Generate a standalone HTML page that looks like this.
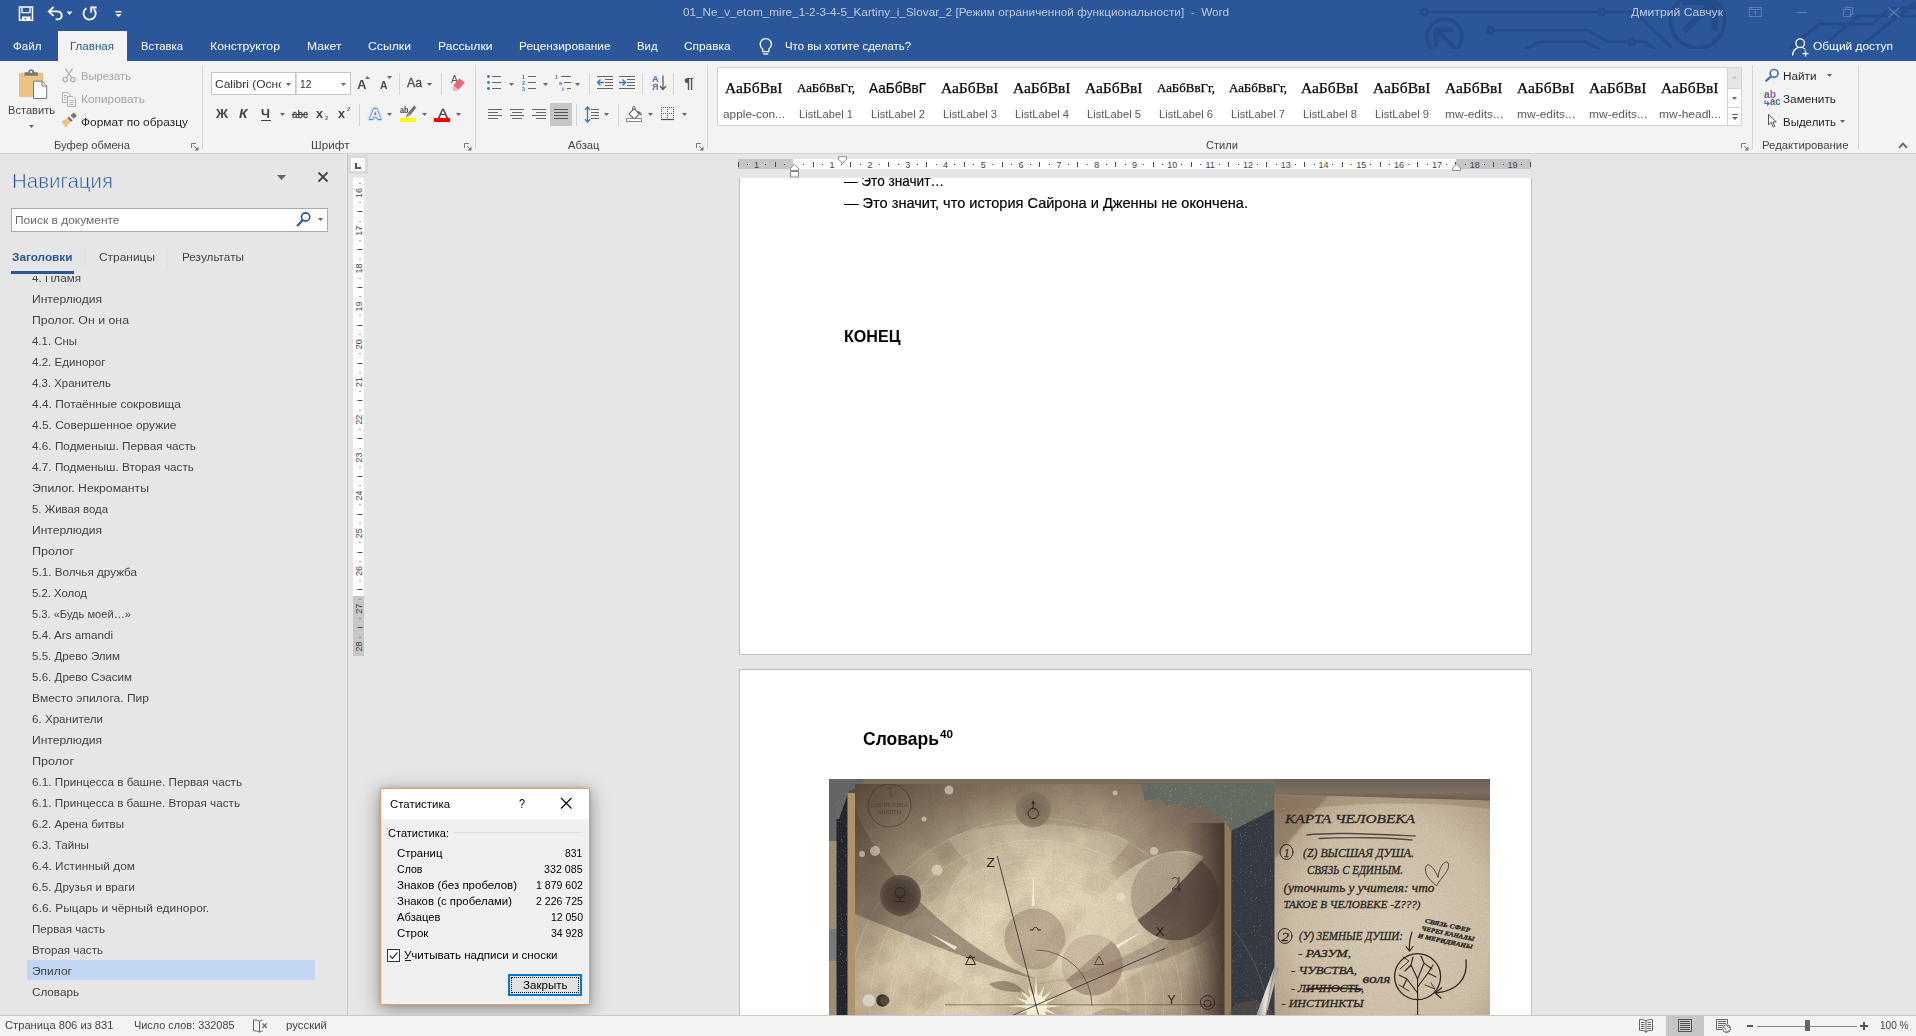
<!DOCTYPE html>
<html lang="ru"><head><meta charset="utf-8"><title>Word</title>
<style>
html,body{margin:0;padding:0;}
body{width:1916px;height:1036px;overflow:hidden;position:relative;background:#e6e6e6;font-family:"Liberation Sans",sans-serif;}
#app{position:absolute;left:0;top:0;width:1916px;height:1036px;overflow:hidden;}
#app div,#app svg,#app span.t{position:absolute;}
span.t{white-space:pre;transform-origin:0 50%;display:block;}
.clip{overflow:hidden;}
</style></head><body><div id="app">
<div style="left:0px;top:0px;width:1916px;height:61px;background:#2b579a;"></div>
<svg style="left:1420px;top:0px;overflow:hidden;" width="496" height="49" viewBox="0 0 496 49">
<g fill="none" stroke="#244c8a" stroke-width="3" stroke-linecap="round">
<circle cx="4.2" cy="12.1" r="3"/><path d="M7.4 12.1H178.8"/><circle cx="182" cy="12.1" r="3"/><path d="M185.200 12.1H216"/>
<circle cx="70.2" cy="30.2" r="3"/><path d="M73.4 30.2H168.5L187.4 41.7H208.4"/><circle cx="211.6" cy="41.7" r="3"/><path d="M214.8 41.7H224L236 50"/>
<path d="M104 50L118 42.5C120 41.9 122 41.7 124 41.7H166L180 50"/>
<circle cx="24.4" cy="36.6" r="17.5" stroke-width="3.8"/>
<circle cx="277.6" cy="21" r="27" stroke-width="4.2"/>
<path d="M219 15.5L251 47"/>
<path d="M368 50L399 24H452L470 8H496"/><path d="M398 50L438 16H496" /><path d="M436 50L496 2"/>
</g>
<g fill="#244c8a">
<path d="M13.5 27.5H33.5V32H21.700L36 46.3L32.8 49.5L18.5 35.200V47H13.5Z"/>
<path d="M262 0H298V31H291V9.5L266 34L261 29L285.5 5H262Z"/>
</g>
</svg>
<svg style="left:0px;top:0px;" width="140" height="30" viewBox="0 0 140 30">
<g fill="none" stroke="#fff" stroke-width="1.5">
<path d="M19.5 7H32.5V20.3H19.5Z"/>
<path d="M22 7.5V12.6H30V7.5" stroke-width="1.3"/>
<path d="M53.6 7L48.8 11.4L53.6 15.8" stroke-width="1.8"/>
<path d="M49.5 11.4H56.5C59.8 11.4 61.7 13.2 61.7 15.4C61.7 17.7 59.9 19.3 57.2 19.3H55.6" stroke-width="1.8"/>
<path d="M86.4 8.3A6.1 6.1 0 1 0 93.7 9" stroke-width="1.8"/>
<path d="M91.2 12.8V7.5H96.6" stroke-width="1.8"/>
<path d="M115.5 11.7H121.5" stroke-width="1.4"/>
</g>
<g fill="#fff"><path d="M66.6 11.6H72.4L69.5 15Z"/><path d="M115.4 14.1H121.6L118.5 17.3Z"/><path d="M22 16.6H30.4V20H26.2V18H24.6V20H22Z"/></g>
</svg>
<span class="t" style="left:683px;top:7.25px;font-size:11.5px;line-height:11.5px;color:#bcc8df;transform:scaleX(1.0220);">01_Ne_v_etom_mire_1-2-3-4-5_Kartiny_i_Slovar_2 [Режим ограниченной функциональности]  -  Word</span>
<span class="t" style="left:1631px;top:7.25px;font-size:11.5px;line-height:11.5px;color:#bcc8df;transform:scaleX(1.0571);">Дмитрий Савчук</span>
<svg style="left:0px;top:0px;" width="1916" height="30" viewBox="0 0 1916 30">
<g fill="none" stroke="#5c7db3" stroke-width="1">
<rect x="1749.5" y="7.5" width="12" height="9"/><path d="M1749.5 9.5H1761.5"/><path d="M1755.5 15V11.2M1753.6 13L1755.5 11.1L1757.4 13"/>
<path d="M1797 12.5H1807"/>
<rect x="1843.5" y="9.5" width="7" height="7"/><path d="M1845.5 9.5V7.5H1852.5V14.5H1850.5"/>
<path d="M1888.5 7.5L1899.5 17.5M1899.5 7.5L1888.5 17.5" stroke-width="1.1"/>
</g></svg>
<div style="left:58px;top:31px;width:69px;height:30px;background:#f3f3f3;"></div>
<span class="t" style="left:12.5px;top:39.65px;font-size:11.7px;line-height:11.7px;color:#fff;transform:scaleX(0.9918);">Файл</span>
<span class="t" style="left:141px;top:39.65px;font-size:11.7px;line-height:11.7px;color:#fff;transform:scaleX(0.9666);">Вставка</span>
<span class="t" style="left:210px;top:39.65px;font-size:11.7px;line-height:11.7px;color:#fff;transform:scaleX(1.0504);">Конструктор</span>
<span class="t" style="left:307px;top:39.65px;font-size:11.7px;line-height:11.7px;color:#fff;transform:scaleX(1.0430);">Макет</span>
<span class="t" style="left:368px;top:39.65px;font-size:11.7px;line-height:11.7px;color:#fff;transform:scaleX(1.0448);">Ссылки</span>
<span class="t" style="left:437.5px;top:39.65px;font-size:11.7px;line-height:11.7px;color:#fff;transform:scaleX(1.0387);">Рассылки</span>
<span class="t" style="left:519px;top:39.65px;font-size:11.7px;line-height:11.7px;color:#fff;transform:scaleX(1.0139);">Рецензирование</span>
<span class="t" style="left:637px;top:39.65px;font-size:11.7px;line-height:11.7px;color:#fff;transform:scaleX(0.9690);">Вид</span>
<span class="t" style="left:684px;top:39.65px;font-size:11.7px;line-height:11.7px;color:#fff;transform:scaleX(1.0140);">Справка</span>
<span class="t" style="left:785px;top:39.65px;font-size:11.7px;line-height:11.7px;color:#fff;transform:scaleX(0.9752);">Что вы хотите сделать?</span>
<span class="t" style="left:70px;top:39.65px;font-size:11.7px;line-height:11.7px;color:#2b579a;transform:scaleX(0.9891);">Главная</span>
<svg style="left:756px;top:36px;" width="20" height="22" viewBox="0 0 20 22"><g fill="none" stroke="#fff" stroke-width="1.3"><path d="M6.8 13.2C5 11.8 4.2 10 4.2 8.2A5.6 5.6 0 0 1 15.4 8.2C15.4 10 14.6 11.8 12.8 13.2V15.6H6.8Z"/><path d="M7.3 18H12.3"/></g></svg>
<svg style="left:1790px;top:36px;" width="22" height="22" viewBox="0 0 22 22"><g fill="none" stroke="#fff" stroke-width="1.3"><circle cx="10.2" cy="7.2" r="4.3"/><path d="M2.6 19.5C2.8 14.8 6 12.3 8.2 11.4M12.4 11.5C13.6 12 14.6 12.7 15.3 13.4"/><path d="M15.5 14.6V20.6M12.5 17.6H18.5"/></g></svg>
<span class="t" style="left:1812.5px;top:39.65px;font-size:11.7px;line-height:11.7px;color:#fff;transform:scaleX(1.0187);">Общий доступ</span>
<div style="left:0px;top:61px;width:1916px;height:92px;background:#f3f3f3;"></div>
<div style="left:0px;top:153px;width:1916px;height:1px;background:#d2d2d2;"></div>
<div style="left:202px;top:65px;width:1px;height:84px;background:#d4d4d4;"></div>
<div style="left:475px;top:65px;width:1px;height:84px;background:#d4d4d4;"></div>
<div style="left:707px;top:65px;width:1px;height:84px;background:#d4d4d4;"></div>
<div style="left:1752px;top:65px;width:1px;height:84px;background:#d4d4d4;"></div>
<div style="left:1858px;top:65px;width:1px;height:84px;background:#d4d4d4;"></div>
<svg style="left:19px;top:69px;" width="29" height="31" viewBox="0 0 29 31">
<rect x="0" y="3.7" width="24.3" height="24.3" rx="1" fill="#eac282"/>
<path d="M5.5 6.800V4.200C5.5 3.5 6 3.2 6.6 3.200H9.200C9.2 1.2 10.5 0.3 12.2 0.300C13.9 0.3 15.2 1.2 15.2 3.200H17.800C18.4 3.2 18.9 3.5 18.9 4.200V6.800Z" fill="#797774"/>
<circle cx="12.2" cy="2.9" r="1.1" fill="#f3f3f3"/>
<path d="M14.5 12.200H23L27.7 17V29.500H14.5Z" fill="#fff" stroke="#797774" stroke-width="1"/>
<path d="M23 12.200V17H27.7" fill="none" stroke="#797774" stroke-width="1"/>
</svg>
<span class="t" style="left:7.5px;top:103.65px;font-size:11.7px;line-height:11.7px;color:#444;transform:scaleX(0.9486);">Вставить</span>
<svg style="left:28.5px;top:124.5px;" width="5" height="3" viewBox="0 0 5 3"><path d="M0 0H5 L2.5 3Z" fill="#666"/></svg>
<svg style="left:61.5px;top:67.5px;" width="15" height="15" viewBox="0 0 15 15"><g fill="none" stroke="#b0b0b0" stroke-width="1.3"><path d="M3.4 0.6L9.9 10M10.6 0.6L4.1 10"/><circle cx="3.2" cy="11.6" r="2.2"/><circle cx="10.8" cy="11.6" r="2.2"/></g></svg>
<span class="t" style="left:80.5px;top:69.65px;font-size:11.7px;line-height:11.7px;color:#a6a6a6;transform:scaleX(0.9618);">Вырезать</span>
<svg style="left:61px;top:90.5px;" width="16" height="16" viewBox="0 0 16 16"><g fill="#f3f3f3" stroke="#b3b3b3" stroke-width="1"><path d="M1.5 1.5H7L9.5 4V11.5H1.5Z"/><path d="M6.5 5.5H12L14.5 8V15.5H6.5Z"/></g><g stroke="#b3b3b3" stroke-width="1"><path d="M3 4.5H6M3 6.5H5M3 8.5H5M8.5 9.5H12.5M8.5 11.5H12.5M8.5 13.5H12.5"/></g></svg>
<span class="t" style="left:80.5px;top:92.65px;font-size:11.7px;line-height:11.7px;color:#a6a6a6;transform:scaleX(1.0169);">Копировать</span>
<svg style="left:61px;top:112px;" width="17" height="17" viewBox="0 0 17 17"><path d="M9.5 3.2L13 0.6L16 4L12.6 6.8Z" fill="#797774"/><path d="M8 4.6L11.6 8.4L9.6 10L6.2 6.2Z" fill="#797774"/><path d="M5.6 6.6L9.2 10.6L4.6 15.8L0.6 9.6Z" fill="#eac282"/></svg>
<span class="t" style="left:80.5px;top:115.65px;font-size:11.7px;line-height:11.7px;color:#262626;transform:scaleX(1.0209);">Формат по образцу</span>
<span class="t" style="left:53.5px;top:138.65px;font-size:11.7px;line-height:11.7px;color:#444;transform:scaleX(0.9569);">Буфер обмена</span>
<svg style="left:191px;top:142.5px;" width="8" height="8" viewBox="0 0 8 8"><g fill="none" stroke="#777" stroke-width="1"><path d="M0.5 5V0.5H5"/><path d="M3 3L6.5 6.5"/></g><path d="M7.5 3.5V7.5H3.5Z" fill="#777"/></svg>
<div style="left:211px;top:72px;width:85px;height:23px;background:#fff;border:1px solid #c6c6c6;box-sizing:border-box;"></div>
<div style="left:296px;top:72px;width:55px;height:23px;background:#fff;border:1px solid #c6c6c6;box-sizing:border-box;border-left-color:#d9d9d9;"></div>
<div class="clip" style="left:212px;top:74px;width:69.3px;height:19px;">
<span class="t" style="left:2.5px;top:4.20px;font-size:11.6px;line-height:11.6px;color:#333;transform:scaleX(1.0324);">Calibri (Осно</span>
</div>
<svg style="left:286px;top:82.5px;" width="5" height="3" viewBox="0 0 5 3"><path d="M0 0H5 L2.5 3Z" fill="#666"/></svg>
<span class="t" style="left:300px;top:78.20px;font-size:11.6px;line-height:11.6px;color:#333;transform:scaleX(0.8910);">12</span>
<svg style="left:341px;top:82.5px;" width="5" height="3" viewBox="0 0 5 3"><path d="M0 0H5 L2.5 3Z" fill="#666"/></svg>
<span class="t" style="left:357px;top:78.00px;font-size:13px;line-height:13px;color:#4a4a4a;font-weight:bold;transform:scaleX(1.0116);">A</span>
<svg style="left:365px;top:75.7px;" width="5" height="3" viewBox="0 0 5 3"><path d="M0 3H5L2.5 0Z" fill="#41719c"/></svg>
<span class="t" style="left:380px;top:79.65px;font-size:10.7px;line-height:10.7px;color:#4a4a4a;font-weight:bold;transform:scaleX(0.9717);">A</span>
<svg style="left:387px;top:75.7px;" width="5" height="3" viewBox="0 0 5 3"><path d="M0 0H5L2.5 3Z" fill="#41719c"/></svg>
<div style="left:399px;top:73px;width:1px;height:22px;background:#d4d4d4;"></div>
<span class="t" style="left:407px;top:77.00px;font-size:12px;line-height:12px;color:#4a4a4a;transform:scaleX(1.0213);-webkit-text-stroke:0.3px #4a4a4a;">Aa</span>
<svg style="left:427px;top:82.5px;" width="5" height="3" viewBox="0 0 5 3"><path d="M0 0H5 L2.5 3Z" fill="#666"/></svg>
<div style="left:441px;top:73px;width:1px;height:22px;background:#d4d4d4;"></div>
<span class="t" style="left:451px;top:74.50px;font-size:10px;line-height:10px;color:#555;transform:scaleX(1.0492);">A</span>
<svg style="left:452px;top:77px;" width="14" height="14" viewBox="0 0 14 14"><path d="M7.2 1.2L12.8 5.4L6.4 12.8L1.2 8.8Z" fill="#e8677c"/><path d="M1.2 8.8L6.4 12.8L5 14H1.8L0.2 12.6Z" fill="#f3b5bf"/></svg>
<span class="t" style="left:216px;top:108.00px;font-size:12px;line-height:12px;color:#444;font-weight:bold;transform:scaleX(1.1050);">Ж</span>
<span class="t" style="left:239px;top:108.00px;font-size:12px;line-height:12px;color:#444;font-weight:bold;font-style:italic;transform:scaleX(1.1501);">К</span>
<span class="t" style="left:261px;top:108.00px;font-size:12px;line-height:12px;color:#444;font-weight:bold;transform:scaleX(1.0667);">Ч</span>
<div style="left:260.5px;top:119.5px;width:10px;height:1.3px;background:#444;"></div>
<svg style="left:280px;top:112.5px;" width="5" height="3" viewBox="0 0 5 3"><path d="M0 0H5 L2.5 3Z" fill="#666"/></svg>
<span class="t" style="left:292px;top:108.75px;font-size:10.5px;line-height:10.5px;color:#444;transform:scaleX(0.9446);text-decoration:line-through;-webkit-text-stroke:0.3px #444;">abc</span>
<span class="t" style="left:316px;top:107.75px;font-size:12.5px;line-height:12.5px;color:#444;font-weight:bold;transform:scaleX(1.0067);">x</span>
<span class="t" style="left:324.5px;top:116.25px;font-size:5.5px;line-height:5.5px;color:#3f74b8;font-weight:bold;transform:scaleX(1.0449);">2</span>
<span class="t" style="left:338px;top:107.75px;font-size:12.5px;line-height:12.5px;color:#444;font-weight:bold;transform:scaleX(1.0067);">x</span>
<span class="t" style="left:346.5px;top:107.25px;font-size:5.5px;line-height:5.5px;color:#3f74b8;font-weight:bold;transform:scaleX(1.0449);">2</span>
<div style="left:359px;top:104px;width:1px;height:22px;background:#d4d4d4;"></div>
<svg style="left:366px;top:103px;" width="18" height="20" viewBox="0 0 18 20"><defs><filter id="glowA" x="-30%" y="-30%" width="160%" height="160%"><feGaussianBlur stdDeviation="0.9"/></filter></defs><text x="9" y="16" text-anchor="middle" font-family="Liberation Sans, sans-serif" font-weight="bold" font-size="15.5" fill="#9dbfee" stroke="#9dbfee" stroke-width="2.4" filter="url(#glowA)">A</text><text x="9" y="16" text-anchor="middle" font-family="Liberation Sans, sans-serif" font-weight="bold" font-size="15.5" fill="#3a6fc0" stroke="#3a6fc0" stroke-width="1.3">A</text><text x="9" y="16" text-anchor="middle" font-family="Liberation Sans, sans-serif" font-weight="bold" font-size="15.5" fill="#fff" stroke="#fff" stroke-width="0.1">A</text></svg>
<svg style="left:387px;top:112.5px;" width="5" height="3" viewBox="0 0 5 3"><path d="M0 0H5 L2.5 3Z" fill="#666"/></svg>
<span class="t" style="left:400px;top:105.75px;font-size:8.5px;line-height:8.5px;color:#444;font-weight:bold;transform:scaleX(0.8567);">ab</span>
<svg style="left:405px;top:105px;" width="12" height="12" viewBox="0 0 12 12"><path d="M9 0.6L11.4 2.6L5 10.4L2.4 8.4Z" fill="#777"/><path d="M2.2 8.8L4.6 10.8L1 12Z" fill="#777"/></svg>
<div style="left:400px;top:118px;width:16px;height:4px;background:#ffff00;"></div>
<svg style="left:422px;top:112.5px;" width="5" height="3" viewBox="0 0 5 3"><path d="M0 0H5 L2.5 3Z" fill="#666"/></svg>
<span class="t" style="left:437.5px;top:106.75px;font-size:13.5px;line-height:13.5px;color:#444;transform:scaleX(1.1092);-webkit-text-stroke:0.3px #444;">A</span>
<div style="left:434px;top:118px;width:16px;height:4px;background:#ff0000;"></div>
<svg style="left:456px;top:112.5px;" width="5" height="3" viewBox="0 0 5 3"><path d="M0 0H5 L2.5 3Z" fill="#666"/></svg>
<span class="t" style="left:311px;top:138.65px;font-size:11.7px;line-height:11.7px;color:#444;transform:scaleX(1.0012);">Шрифт</span>
<svg style="left:464px;top:142.5px;" width="8" height="8" viewBox="0 0 8 8"><g fill="none" stroke="#777" stroke-width="1"><path d="M0.5 5V0.5H5"/><path d="M3 3L6.5 6.5"/></g><path d="M7.5 3.5V7.5H3.5Z" fill="#777"/></svg>
<svg style="left:487px;top:75px;" width="18" height="18" viewBox="0 0 18 18"><path d="M5 1.5H14M5 7.5H14M5 13.5H14" stroke="#666" stroke-width="1" fill="none"/></svg>
<svg style="left:487px;top:75px;" width="4" height="16" viewBox="0 0 4 16"><g fill="#3f74b8"><circle cx="1.5" cy="1.5" r="1.4"/><circle cx="1.5" cy="7.5" r="1.4"/><circle cx="1.5" cy="13.5" r="1.4"/></g></svg>
<svg style="left:508.5px;top:82.5px;" width="5" height="3" viewBox="0 0 5 3"><path d="M0 0H5 L2.5 3Z" fill="#666"/></svg>
<svg style="left:522px;top:75px;" width="18" height="18" viewBox="0 0 18 18"><path d="M6 1.5H14M6 7.5H14M6 13.5H14" stroke="#666" stroke-width="1" fill="none"/></svg>
<span class="t" style="left:522px;top:74.00px;font-size:6px;line-height:6px;color:#3f74b8;font-weight:bold;transform:scaleX(0.8972);">1</span>
<span class="t" style="left:522px;top:80.00px;font-size:6px;line-height:6px;color:#3f74b8;font-weight:bold;transform:scaleX(0.8972);">2</span>
<span class="t" style="left:522px;top:86.00px;font-size:6px;line-height:6px;color:#3f74b8;font-weight:bold;transform:scaleX(0.8972);">3</span>
<svg style="left:542.5px;top:82.5px;" width="5" height="3" viewBox="0 0 5 3"><path d="M0 0H5 L2.5 3Z" fill="#666"/></svg>
<svg style="left:555px;top:75px;" width="18" height="18" viewBox="0 0 18 18"><path d="M6 1.5H16M9 7.5H16M12 13.5H16" stroke="#666" stroke-width="1" fill="none"/></svg>
<span class="t" style="left:555px;top:74.00px;font-size:6px;line-height:6px;color:#3f74b8;font-weight:bold;transform:scaleX(0.8972);">1</span>
<span class="t" style="left:558.5px;top:80.00px;font-size:6px;line-height:6px;color:#3f74b8;font-weight:bold;transform:scaleX(0.8972);">a</span>
<span class="t" style="left:562px;top:86.00px;font-size:6px;line-height:6px;color:#3f74b8;font-weight:bold;transform:scaleX(1.1963);">i</span>
<svg style="left:575px;top:82.5px;" width="5" height="3" viewBox="0 0 5 3"><path d="M0 0H5 L2.5 3Z" fill="#666"/></svg>
<div style="left:589px;top:73px;width:1px;height:22px;background:#d4d4d4;"></div>
<svg style="left:597px;top:75px;" width="18" height="18" viewBox="0 0 18 18"><path d="M0 1.5H16M8 4.5H16M8 7.5H16M8 10.5H16M0 13.5H16" stroke="#666" stroke-width="1" fill="none"/></svg>
<svg style="left:597px;top:78px;" width="8" height="9" viewBox="0 0 8 9"><path d="M0.5 4.5H7M3.5 1.5L0.5 4.5L3.5 7.5" fill="none" stroke="#3f74b8" stroke-width="1.4"/></svg>
<svg style="left:619px;top:75px;" width="18" height="18" viewBox="0 0 18 18"><path d="M0 1.5H16M8 4.5H16M8 7.5H16M8 10.5H16M0 13.5H16" stroke="#666" stroke-width="1" fill="none"/></svg>
<svg style="left:619px;top:78px;" width="8" height="9" viewBox="0 0 8 9"><path d="M0 4.5H6.5M3.5 1.5L6.5 4.5L3.5 7.5" fill="none" stroke="#3f74b8" stroke-width="1.4"/></svg>
<div style="left:642px;top:73px;width:1px;height:22px;background:#d4d4d4;"></div>
<span class="t" style="left:652px;top:74.50px;font-size:9px;line-height:9px;color:#3f74b8;font-weight:bold;">A</span>
<span class="t" style="left:652px;top:82.50px;font-size:9px;line-height:9px;color:#8e5ab5;font-weight:bold;transform:scaleX(1.0048);">Я</span>
<svg style="left:659px;top:75px;" width="8" height="16" viewBox="0 0 8 16"><path d="M4 0.5V14M1 11L4 14.5L7 11" fill="none" stroke="#555" stroke-width="1.2"/></svg>
<div style="left:673px;top:73px;width:1px;height:22px;background:#d4d4d4;"></div>
<span class="t" style="left:684px;top:75.75px;font-size:14.5px;line-height:14.5px;color:#555;font-weight:bold;transform:scaleX(1.2379);">¶</span>
<svg style="left:488px;top:109px;" width="18" height="18" viewBox="0 0 18 18"><path d="M0 0.5H14M0 3.5H10M0 6.5H14M0 9.5H10" stroke="#666" stroke-width="1" fill="none"/></svg>
<svg style="left:510px;top:109px;" width="18" height="18" viewBox="0 0 18 18"><path d="M0 0.5H14M2 3.5H12M0 6.5H14M2 9.5H12" stroke="#666" stroke-width="1" fill="none"/></svg>
<svg style="left:532px;top:109px;" width="18" height="18" viewBox="0 0 18 18"><path d="M0 0.5H14M4 3.5H14M0 6.5H14M4 9.5H14" stroke="#666" stroke-width="1" fill="none"/></svg>
<div style="left:550px;top:103px;width:22px;height:23px;background:#c6c6c6;"></div>
<svg style="left:554px;top:109px;" width="18" height="18" viewBox="0 0 18 18"><path d="M0 0.5H14M0 3.5H14M0 6.5H14M0 9.5H14" stroke="#555" stroke-width="1" fill="none"/></svg>
<div style="left:576px;top:104px;width:1px;height:22px;background:#d4d4d4;"></div>
<svg style="left:591px;top:109px;" width="18" height="18" viewBox="0 0 18 18"><path d="M0 0.5H8M0 3.5H8M0 6.5H8M0 9.5H8" stroke="#666" stroke-width="1" fill="none"/></svg>
<svg style="left:584px;top:106px;" width="7" height="17" viewBox="0 0 7 17"><path d="M3.5 1V16M1 3.8L3.5 1L6 3.8M1 13.2L3.5 16L6 13.2" fill="none" stroke="#3f74b8" stroke-width="1.3"/></svg>
<svg style="left:603.5px;top:112.5px;" width="5" height="3" viewBox="0 0 5 3"><path d="M0 0H5 L2.5 3Z" fill="#666"/></svg>
<div style="left:618px;top:104px;width:1px;height:22px;background:#d4d4d4;"></div>
<svg style="left:626px;top:104px;" width="18" height="19" viewBox="0 0 18 19"><path d="M8.2 4.6L13.4 9.8L8.2 15L3 9.8Z" fill="#fff" stroke="#666" stroke-width="1.1" stroke-linejoin="round"/><path d="M6.6 6.2V3.6C6.6 1.8 9 1.8 9 3.6V5.4" fill="none" stroke="#666" stroke-width="1"/><path d="M11.2 7.6C13.6 7.4 15.2 8.8 15.2 11.2C14.2 9.8 13.2 9.4 11.8 9.2Z" fill="#3f74b8" stroke="#3f74b8" stroke-width=".8"/><rect x="0.5" y="14.5" width="15" height="3" fill="#fff" stroke="#8a8a8a" stroke-width="1"/></svg>
<svg style="left:648px;top:112.5px;" width="5" height="3" viewBox="0 0 5 3"><path d="M0 0H5 L2.5 3Z" fill="#666"/></svg>
<svg style="left:661px;top:106px;" width="14" height="15" viewBox="0 0 14 15"><path d="M0 1.5H13M0 7.5H13M0.5 1V13M6.5 1V13M12.5 1V13" fill="none" stroke="#555" stroke-width="1" stroke-dasharray="1 1"/><path d="M0 13.5H13" stroke="#555" stroke-width="1.2"/></svg>
<svg style="left:682px;top:112.5px;" width="5" height="3" viewBox="0 0 5 3"><path d="M0 0H5 L2.5 3Z" fill="#666"/></svg>
<span class="t" style="left:567.5px;top:138.65px;font-size:11.7px;line-height:11.7px;color:#444;transform:scaleX(0.9605);">Абзац</span>
<svg style="left:696px;top:142.5px;" width="8" height="8" viewBox="0 0 8 8"><g fill="none" stroke="#777" stroke-width="1"><path d="M0.5 5V0.5H5"/><path d="M3 3L6.5 6.5"/></g><path d="M7.5 3.5V7.5H3.5Z" fill="#777"/></svg>
<div style="left:717px;top:67px;width:1025px;height:59px;background:#fff;border:1px solid #d4d4d4;box-sizing:border-box;"></div>
<div style="left:1727px;top:67px;width:15px;height:59px;background:#fff;border:1px solid #d4d4d4;box-sizing:border-box;"></div>
<div style="left:1728px;top:68px;width:13px;height:20px;background:#e6e6e6;"></div>
<div style="left:1728px;top:88px;width:13px;height:1px;background:#d4d4d4;"></div>
<div style="left:1728px;top:107px;width:13px;height:1px;background:#d4d4d4;"></div>
<svg style="left:1732px;top:75.5px;" width="5" height="3" viewBox="0 0 5 3"><path d="M0 3H5L2.5 0Z" fill="#c2c2c2"/></svg>
<svg style="left:1732px;top:96.5px;" width="5" height="3" viewBox="0 0 5 3"><path d="M0 0H5 L2.5 3Z" fill="#666"/></svg>
<div style="left:1732px;top:113.5px;width:6px;height:1px;background:#666;"></div>
<svg style="left:1732px;top:116.5px;" width="6" height="3" viewBox="0 0 6 3"><path d="M0 0H6 L3 3Z" fill="#666"/></svg>
<span class="t" style="left:725px;top:79.70px;font-size:15.6px;line-height:15.6px;color:#000;font-family:'Liberation Serif', serif;transform:scaleX(0.9943);-webkit-text-stroke:0.25px #000;">АаБбВвІ</span>
<span class="t" style="left:722.5px;top:107.65px;font-size:11.7px;line-height:11.7px;color:#5a5a5a;transform:scaleX(1.0151);">apple-con...</span>
<span class="t" style="left:796.5px;top:81.70px;font-size:12.6px;line-height:12.6px;color:#000;font-family:'Liberation Serif', serif;transform:scaleX(1.0232);-webkit-text-stroke:0.25px #000;">АаБбВвГг,</span>
<span class="t" style="left:798.5px;top:107.65px;font-size:11.7px;line-height:11.7px;color:#5a5a5a;transform:scaleX(0.9550);">ListLabel 1</span>
<span class="t" style="left:869px;top:80.70px;font-size:14.6px;line-height:14.6px;color:#000;transform:scaleX(0.9292);-webkit-text-stroke:0.2px #000;">АаБбВвГ</span>
<span class="t" style="left:870.5px;top:107.65px;font-size:11.7px;line-height:11.7px;color:#5a5a5a;transform:scaleX(0.9550);">ListLabel 2</span>
<span class="t" style="left:941px;top:79.70px;font-size:15.6px;line-height:15.6px;color:#000;font-family:'Liberation Serif', serif;transform:scaleX(0.9943);-webkit-text-stroke:0.25px #000;">АаБбВвІ</span>
<span class="t" style="left:942.5px;top:107.65px;font-size:11.7px;line-height:11.7px;color:#5a5a5a;transform:scaleX(0.9550);">ListLabel 3</span>
<span class="t" style="left:1013px;top:79.70px;font-size:15.6px;line-height:15.6px;color:#000;font-family:'Liberation Serif', serif;transform:scaleX(0.9943);-webkit-text-stroke:0.25px #000;">АаБбВвІ</span>
<span class="t" style="left:1014.5px;top:107.65px;font-size:11.7px;line-height:11.7px;color:#5a5a5a;transform:scaleX(0.9550);">ListLabel 4</span>
<span class="t" style="left:1085px;top:79.70px;font-size:15.6px;line-height:15.6px;color:#000;font-family:'Liberation Serif', serif;transform:scaleX(0.9943);-webkit-text-stroke:0.25px #000;">АаБбВвІ</span>
<span class="t" style="left:1086.5px;top:107.65px;font-size:11.7px;line-height:11.7px;color:#5a5a5a;transform:scaleX(0.9550);">ListLabel 5</span>
<span class="t" style="left:1156.5px;top:81.70px;font-size:12.6px;line-height:12.6px;color:#000;font-family:'Liberation Serif', serif;transform:scaleX(1.0232);-webkit-text-stroke:0.25px #000;">АаБбВвГг,</span>
<span class="t" style="left:1158.5px;top:107.65px;font-size:11.7px;line-height:11.7px;color:#5a5a5a;transform:scaleX(0.9550);">ListLabel 6</span>
<span class="t" style="left:1228.5px;top:81.70px;font-size:12.6px;line-height:12.6px;color:#000;font-family:'Liberation Serif', serif;transform:scaleX(1.0232);-webkit-text-stroke:0.25px #000;">АаБбВвГг,</span>
<span class="t" style="left:1230.5px;top:107.65px;font-size:11.7px;line-height:11.7px;color:#5a5a5a;transform:scaleX(0.9550);">ListLabel 7</span>
<span class="t" style="left:1301px;top:79.70px;font-size:15.6px;line-height:15.6px;color:#000;font-family:'Liberation Serif', serif;transform:scaleX(0.9943);-webkit-text-stroke:0.25px #000;">АаБбВвІ</span>
<span class="t" style="left:1302.5px;top:107.65px;font-size:11.7px;line-height:11.7px;color:#5a5a5a;transform:scaleX(0.9550);">ListLabel 8</span>
<span class="t" style="left:1373px;top:79.70px;font-size:15.6px;line-height:15.6px;color:#000;font-family:'Liberation Serif', serif;transform:scaleX(0.9943);-webkit-text-stroke:0.25px #000;">АаБбВвІ</span>
<span class="t" style="left:1374.5px;top:107.65px;font-size:11.7px;line-height:11.7px;color:#5a5a5a;transform:scaleX(0.9550);">ListLabel 9</span>
<span class="t" style="left:1445px;top:79.70px;font-size:15.6px;line-height:15.6px;color:#000;font-family:'Liberation Serif', serif;transform:scaleX(0.9943);-webkit-text-stroke:0.25px #000;">АаБбВвІ</span>
<span class="t" style="left:1444.5px;top:107.65px;font-size:11.7px;line-height:11.7px;color:#5a5a5a;transform:scaleX(1.0265);">mw-edits...</span>
<span class="t" style="left:1517px;top:79.70px;font-size:15.6px;line-height:15.6px;color:#000;font-family:'Liberation Serif', serif;transform:scaleX(0.9943);-webkit-text-stroke:0.25px #000;">АаБбВвІ</span>
<span class="t" style="left:1516.5px;top:107.65px;font-size:11.7px;line-height:11.7px;color:#5a5a5a;transform:scaleX(1.0265);">mw-edits...</span>
<span class="t" style="left:1589px;top:79.70px;font-size:15.6px;line-height:15.6px;color:#000;font-family:'Liberation Serif', serif;transform:scaleX(0.9943);-webkit-text-stroke:0.25px #000;">АаБбВвІ</span>
<span class="t" style="left:1588.5px;top:107.65px;font-size:11.7px;line-height:11.7px;color:#5a5a5a;transform:scaleX(1.0265);">mw-edits...</span>
<span class="t" style="left:1661px;top:79.70px;font-size:15.6px;line-height:15.6px;color:#000;font-family:'Liberation Serif', serif;transform:scaleX(0.9943);-webkit-text-stroke:0.25px #000;">АаБбВвІ</span>
<span class="t" style="left:1658.5px;top:107.65px;font-size:11.7px;line-height:11.7px;color:#5a5a5a;transform:scaleX(1.0261);">mw-headl...</span>
<span class="t" style="left:1206px;top:138.65px;font-size:11.7px;line-height:11.7px;color:#444;transform:scaleX(0.9503);">Стили</span>
<svg style="left:1741px;top:142.5px;" width="8" height="8" viewBox="0 0 8 8"><g fill="none" stroke="#777" stroke-width="1"><path d="M0.5 5V0.5H5"/><path d="M3 3L6.5 6.5"/></g><path d="M7.5 3.5V7.5H3.5Z" fill="#777"/></svg>
<svg style="left:1764px;top:67px;" width="16" height="16" viewBox="0 0 16 16"><circle cx="10.1" cy="6.4" r="3.9" fill="#fff" stroke="#3f74b8" stroke-width="1.7"/><path d="M7.2 9.4L2.2 13.6" stroke="#3f74b8" stroke-width="2.3" stroke-linecap="round"/></svg>
<span class="t" style="left:1783px;top:69.65px;font-size:11.7px;line-height:11.7px;color:#262626;transform:scaleX(1.0042);">Найти</span>
<svg style="left:1827px;top:74px;" width="5" height="3" viewBox="0 0 5 3"><path d="M0 0H5 L2.5 3Z" fill="#666"/></svg>
<span class="t" style="left:1764px;top:89.50px;font-size:10px;line-height:10px;color:#666;font-weight:bold;transform:scaleX(1.0281);">a<span style="color:#9b59b6">b</span></span>
<span class="t" style="left:1769.5px;top:96.50px;font-size:10px;line-height:10px;color:#666;font-weight:bold;transform:scaleX(0.9438);">a<span style="color:#3f74b8">c</span></span>
<svg style="left:1763.5px;top:99.5px;" width="6" height="6" viewBox="0 0 6 6"><path d="M1 0.5V3.5H5M3 1.5L5 3.5L3 5.5" fill="none" stroke="#3f74b8" stroke-width="1.2"/></svg>
<span class="t" style="left:1783px;top:92.65px;font-size:11.7px;line-height:11.7px;color:#262626;transform:scaleX(1.0089);">Заменить</span>
<svg style="left:1767px;top:113px;" width="10" height="16" viewBox="0 0 10 16"><path d="M1.5 1.2V11.8L4.2 9.4L6.2 14L7.8 13.3L5.9 8.9H9.2Z" fill="#fff" stroke="#555" stroke-width="1" stroke-linejoin="round"/></svg>
<span class="t" style="left:1783px;top:115.65px;font-size:11.7px;line-height:11.7px;color:#262626;transform:scaleX(0.9829);">Выделить</span>
<svg style="left:1839.5px;top:120px;" width="5" height="3" viewBox="0 0 5 3"><path d="M0 0H5 L2.5 3Z" fill="#666"/></svg>
<span class="t" style="left:1761.5px;top:138.65px;font-size:11.7px;line-height:11.7px;color:#444;transform:scaleX(0.9716);">Редактирование</span>
<svg style="left:1897.5px;top:141.5px;" width="10" height="7" viewBox="0 0 10 7"><path d="M1 5.8L5 1.6L9 5.8" fill="none" stroke="#666" stroke-width="1.9"/></svg>
<div style="left:347px;top:154px;width:1px;height:861px;background:#c6c6c6;"></div>
<span class="t" style="left:12px;top:170.80px;font-size:20.4px;line-height:20.4px;color:#2b579a;transform:scaleX(1.0026);-webkit-text-stroke:0.55px #e6e6e6;">Навигация</span>
<svg style="left:277px;top:175px;" width="9" height="5" viewBox="0 0 9 5"><path d="M0 0H9L4.5 5Z" fill="#666"/></svg>
<svg style="left:317px;top:171px;" width="12" height="12" viewBox="0 0 12 12"><path d="M1.5 1.5L10.5 10.5M10.5 1.5L1.5 10.5" stroke="#444" stroke-width="1.8" fill="none"/></svg>
<div style="left:11px;top:208px;width:317px;height:24px;background:#fff;border:1px solid #ababab;box-sizing:border-box;"></div>
<span class="t" style="left:14.5px;top:213.65px;font-size:11.7px;line-height:11.7px;color:#6a6a6a;transform:scaleX(1.0237);">Поиск в документе</span>
<svg style="left:296px;top:211px;" width="16" height="16" viewBox="0 0 16 16"><circle cx="9.6" cy="6" r="4.1" fill="none" stroke="#2b579a" stroke-width="1.7"/><path d="M6.6 9.2L1.6 14.4" stroke="#2b579a" stroke-width="2.1" stroke-linecap="round"/></svg>
<svg style="left:318px;top:218px;" width="5" height="3" viewBox="0 0 5 3"><path d="M0 0H5L2.5 3Z" fill="#666"/></svg>
<span class="t" style="left:12px;top:250.65px;font-size:11.7px;line-height:11.7px;color:#2b579a;font-weight:bold;transform:scaleX(1.0081);">Заголовки</span>
<div style="left:11px;top:271px;width:63px;height:3px;background:#2b579a;"></div>
<span class="t" style="left:99px;top:250.65px;font-size:11.7px;line-height:11.7px;color:#444;transform:scaleX(1.0205);">Страницы</span>
<span class="t" style="left:182px;top:250.65px;font-size:11.7px;line-height:11.7px;color:#444;transform:scaleX(1.0071);">Результаты</span>
<div style="left:84px;top:249px;width:1px;height:18px;background:#dedede;"></div>
<div style="left:167px;top:249px;width:1px;height:18px;background:#dedede;"></div>
<div class="clip" style="left:0;top:276px;width:346px;height:739px;">
<div style="left:27px;top:684px;width:288px;height:19.5px;background:#c2d5f2;"></div>
<span class="t" style="left:32px;top:-4.35px;font-size:11.7px;line-height:11.7px;color:#444;transform:scaleX(0.9981);">4. Пламя</span>
<span class="t" style="left:32px;top:16.65px;font-size:11.7px;line-height:11.7px;color:#444;transform:scaleX(1.0342);">Интерлюдия</span>
<span class="t" style="left:32px;top:37.65px;font-size:11.7px;line-height:11.7px;color:#444;transform:scaleX(1.0549);">Пролог. Он и она</span>
<span class="t" style="left:32px;top:58.65px;font-size:11.7px;line-height:11.7px;color:#444;transform:scaleX(0.9773);">4.1. Сны</span>
<span class="t" style="left:32px;top:79.65px;font-size:11.7px;line-height:11.7px;color:#444;transform:scaleX(0.9918);">4.2. Единорог</span>
<span class="t" style="left:32px;top:100.65px;font-size:11.7px;line-height:11.7px;color:#444;transform:scaleX(0.9781);">4.3. Хранитель</span>
<span class="t" style="left:32px;top:121.65px;font-size:11.7px;line-height:11.7px;color:#444;transform:scaleX(1.0198);">4.4. Потаённые сокровища</span>
<span class="t" style="left:32px;top:142.65px;font-size:11.7px;line-height:11.7px;color:#444;transform:scaleX(1.0213);">4.5. Совершенное оружие</span>
<span class="t" style="left:32px;top:163.65px;font-size:11.7px;line-height:11.7px;color:#444;transform:scaleX(1.0067);">4.6. Подменыш. Первая часть</span>
<span class="t" style="left:32px;top:184.65px;font-size:11.7px;line-height:11.7px;color:#444;transform:scaleX(1.0059);">4.7. Подменыш. Вторая часть</span>
<span class="t" style="left:32px;top:205.65px;font-size:11.7px;line-height:11.7px;color:#444;transform:scaleX(1.0461);">Эпилог. Некроманты</span>
<span class="t" style="left:32px;top:226.65px;font-size:11.7px;line-height:11.7px;color:#444;transform:scaleX(0.9730);">5. Живая вода</span>
<span class="t" style="left:32px;top:247.65px;font-size:11.7px;line-height:11.7px;color:#444;transform:scaleX(1.0342);">Интерлюдия</span>
<span class="t" style="left:32px;top:268.65px;font-size:11.7px;line-height:11.7px;color:#444;transform:scaleX(1.0808);">Пролог</span>
<span class="t" style="left:32px;top:289.65px;font-size:11.7px;line-height:11.7px;color:#444;transform:scaleX(0.9987);">5.1. Волчья дружба</span>
<span class="t" style="left:32px;top:310.65px;font-size:11.7px;line-height:11.7px;color:#444;transform:scaleX(0.9705);">5.2. Холод</span>
<span class="t" style="left:32px;top:331.65px;font-size:11.7px;line-height:11.7px;color:#444;transform:scaleX(0.9516);">5.3. «Будь моей…»</span>
<span class="t" style="left:32px;top:352.65px;font-size:11.7px;line-height:11.7px;color:#444;transform:scaleX(0.9973);">5.4. Ars amandi</span>
<span class="t" style="left:32px;top:373.65px;font-size:11.7px;line-height:11.7px;color:#444;transform:scaleX(0.9900);">5.5. Древо Элим</span>
<span class="t" style="left:32px;top:394.65px;font-size:11.7px;line-height:11.7px;color:#444;transform:scaleX(0.9921);">5.6. Древо Сэасим</span>
<span class="t" style="left:32px;top:415.65px;font-size:11.7px;line-height:11.7px;color:#444;transform:scaleX(1.0289);">Вместо эпилога. Пир</span>
<span class="t" style="left:32px;top:436.65px;font-size:11.7px;line-height:11.7px;color:#444;transform:scaleX(0.9934);">6. Хранители</span>
<span class="t" style="left:32px;top:457.65px;font-size:11.7px;line-height:11.7px;color:#444;transform:scaleX(1.0342);">Интерлюдия</span>
<span class="t" style="left:32px;top:478.65px;font-size:11.7px;line-height:11.7px;color:#444;transform:scaleX(1.0808);">Пролог</span>
<span class="t" style="left:32px;top:499.65px;font-size:11.7px;line-height:11.7px;color:#444;transform:scaleX(1.0011);">6.1. Принцесса в башне. Первая часть</span>
<span class="t" style="left:32px;top:520.65px;font-size:11.7px;line-height:11.7px;color:#444;transform:scaleX(1.0004);">6.1. Принцесса в башне. Вторая часть</span>
<span class="t" style="left:32px;top:541.65px;font-size:11.7px;line-height:11.7px;color:#444;transform:scaleX(0.9899);">6.2. Арена битвы</span>
<span class="t" style="left:32px;top:562.65px;font-size:11.7px;line-height:11.7px;color:#444;transform:scaleX(0.9956);">6.3. Тайны</span>
<span class="t" style="left:32px;top:583.65px;font-size:11.7px;line-height:11.7px;color:#444;transform:scaleX(1.0167);">6.4. Истинный дом</span>
<span class="t" style="left:32px;top:604.65px;font-size:11.7px;line-height:11.7px;color:#444;transform:scaleX(0.9935);">6.5. Друзья и враги</span>
<span class="t" style="left:32px;top:625.65px;font-size:11.7px;line-height:11.7px;color:#444;transform:scaleX(1.0226);">6.6. Рыцарь и чёрный единорог.</span>
<span class="t" style="left:32px;top:646.65px;font-size:11.7px;line-height:11.7px;color:#444;transform:scaleX(0.9940);">Первая часть</span>
<span class="t" style="left:32px;top:667.65px;font-size:11.7px;line-height:11.7px;color:#444;transform:scaleX(0.9917);">Вторая часть</span>
<span class="t" style="left:32px;top:688.65px;font-size:11.7px;line-height:11.7px;color:#444;transform:scaleX(1.0261);">Эпилог</span>
<span class="t" style="left:32px;top:709.65px;font-size:11.7px;line-height:11.7px;color:#444;transform:scaleX(0.9987);">Словарь</span>
</div>
<div style="left:348px;top:155px;width:20px;height:19px;background:#dadada;"></div>
<div style="left:351px;top:158px;width:14px;height:13px;background:#fff;"></div>
<svg style="left:354px;top:162px;" width="8" height="8" viewBox="0 0 8 8"><path d="M2 1V6H7" fill="none" stroke="#555" stroke-width="2"/></svg>
<div style="left:352.5px;top:178px;width:11px;height:418px;background:#fff;"></div>
<div style="left:352.5px;top:596px;width:11px;height:60px;background:#c6c6c6;"></div>
<svg style="left:352.5px;top:178px;overflow:hidden;" width="11" height="478" viewBox="0 0 11 478"><text x="0" y="0" transform="translate(9.2 15.0) rotate(-90)" text-anchor="middle" font-family="Liberation Sans, sans-serif" font-size="9" fill="#444">16</text><rect x="4.5" y="33" width="5" height="1" fill="#4a4a4a"/><rect x="6.5" y="5" width="1" height="1" fill="#4a4a4a"/><rect x="6.5" y="24" width="1" height="1" fill="#4a4a4a"/><text x="0" y="0" transform="translate(9.2 52.8) rotate(-90)" text-anchor="middle" font-family="Liberation Sans, sans-serif" font-size="9" fill="#444">17</text><rect x="4.5" y="71" width="5" height="1" fill="#4a4a4a"/><rect x="6.5" y="43" width="1" height="1" fill="#4a4a4a"/><rect x="6.5" y="62" width="1" height="1" fill="#4a4a4a"/><text x="0" y="0" transform="translate(9.2 90.6) rotate(-90)" text-anchor="middle" font-family="Liberation Sans, sans-serif" font-size="9" fill="#444">18</text><rect x="4.5" y="109" width="5" height="1" fill="#4a4a4a"/><rect x="6.5" y="81" width="1" height="1" fill="#4a4a4a"/><rect x="6.5" y="100" width="1" height="1" fill="#4a4a4a"/><text x="0" y="0" transform="translate(9.2 128.4) rotate(-90)" text-anchor="middle" font-family="Liberation Sans, sans-serif" font-size="9" fill="#444">19</text><rect x="4.5" y="147" width="5" height="1" fill="#4a4a4a"/><rect x="6.5" y="118" width="1" height="1" fill="#4a4a4a"/><rect x="6.5" y="137" width="1" height="1" fill="#4a4a4a"/><text x="0" y="0" transform="translate(9.2 166.2) rotate(-90)" text-anchor="middle" font-family="Liberation Sans, sans-serif" font-size="9" fill="#444">20</text><rect x="4.5" y="185" width="5" height="1" fill="#4a4a4a"/><rect x="6.5" y="156" width="1" height="1" fill="#4a4a4a"/><rect x="6.5" y="175" width="1" height="1" fill="#4a4a4a"/><text x="0" y="0" transform="translate(9.2 204.0) rotate(-90)" text-anchor="middle" font-family="Liberation Sans, sans-serif" font-size="9" fill="#444">21</text><rect x="4.5" y="222" width="5" height="1" fill="#4a4a4a"/><rect x="6.5" y="194" width="1" height="1" fill="#4a4a4a"/><rect x="6.5" y="213" width="1" height="1" fill="#4a4a4a"/><text x="0" y="0" transform="translate(9.2 241.8) rotate(-90)" text-anchor="middle" font-family="Liberation Sans, sans-serif" font-size="9" fill="#444">22</text><rect x="4.5" y="260" width="5" height="1" fill="#4a4a4a"/><rect x="6.5" y="232" width="1" height="1" fill="#4a4a4a"/><rect x="6.5" y="251" width="1" height="1" fill="#4a4a4a"/><text x="0" y="0" transform="translate(9.2 279.6) rotate(-90)" text-anchor="middle" font-family="Liberation Sans, sans-serif" font-size="9" fill="#444">23</text><rect x="4.5" y="298" width="5" height="1" fill="#4a4a4a"/><rect x="6.5" y="270" width="1" height="1" fill="#4a4a4a"/><rect x="6.5" y="289" width="1" height="1" fill="#4a4a4a"/><text x="0" y="0" transform="translate(9.2 317.4) rotate(-90)" text-anchor="middle" font-family="Liberation Sans, sans-serif" font-size="9" fill="#444">24</text><rect x="4.5" y="336" width="5" height="1" fill="#4a4a4a"/><rect x="6.5" y="307" width="1" height="1" fill="#4a4a4a"/><rect x="6.5" y="326" width="1" height="1" fill="#4a4a4a"/><text x="0" y="0" transform="translate(9.2 355.2) rotate(-90)" text-anchor="middle" font-family="Liberation Sans, sans-serif" font-size="9" fill="#444">25</text><rect x="4.5" y="374" width="5" height="1" fill="#4a4a4a"/><rect x="6.5" y="345" width="1" height="1" fill="#4a4a4a"/><rect x="6.5" y="364" width="1" height="1" fill="#4a4a4a"/><text x="0" y="0" transform="translate(9.2 393.0) rotate(-90)" text-anchor="middle" font-family="Liberation Sans, sans-serif" font-size="9" fill="#444">26</text><rect x="4.5" y="411" width="5" height="1" fill="#4a4a4a"/><rect x="6.5" y="383" width="1" height="1" fill="#4a4a4a"/><rect x="6.5" y="402" width="1" height="1" fill="#4a4a4a"/><text x="0" y="0" transform="translate(9.2 430.8) rotate(-90)" text-anchor="middle" font-family="Liberation Sans, sans-serif" font-size="9" fill="#444">27</text><rect x="4.5" y="449" width="5" height="1" fill="#4a4a4a"/><rect x="6.5" y="421" width="1" height="1" fill="#4a4a4a"/><rect x="6.5" y="440" width="1" height="1" fill="#4a4a4a"/><text x="0" y="0" transform="translate(9.2 468.6) rotate(-90)" text-anchor="middle" font-family="Liberation Sans, sans-serif" font-size="9" fill="#444">28</text><rect x="6.5" y="459" width="1" height="1" fill="#4a4a4a"/></svg>
<div style="left:738px;top:159px;width:55px;height:10px;background:#c6c6c6;"></div>
<div style="left:793px;top:159px;width:663px;height:10px;background:#fff;"></div>
<div style="left:1456px;top:159px;width:75px;height:10px;background:#c6c6c6;"></div>
<svg style="left:738px;top:159px;" width="794" height="10" viewBox="0 0 794 10"><text x="18.5" y="9" text-anchor="middle" font-family="Liberation Sans, sans-serif" font-size="9" fill="#444">1</text><rect x="37" y="3" width="1" height="5" fill="#4a4a4a"/><rect x="9" y="5" width="1" height="1" fill="#4a4a4a"/><rect x="27" y="5" width="1" height="1" fill="#4a4a4a"/><rect x="75" y="3" width="1" height="5" fill="#4a4a4a"/><rect x="46" y="5" width="1" height="1" fill="#4a4a4a"/><rect x="65" y="5" width="1" height="1" fill="#4a4a4a"/><text x="94.1" y="9" text-anchor="middle" font-family="Liberation Sans, sans-serif" font-size="9" fill="#444">1</text><rect x="112" y="3" width="1" height="5" fill="#4a4a4a"/><rect x="84" y="5" width="1" height="1" fill="#4a4a4a"/><rect x="103" y="5" width="1" height="1" fill="#4a4a4a"/><text x="131.9" y="9" text-anchor="middle" font-family="Liberation Sans, sans-serif" font-size="9" fill="#444">2</text><rect x="150" y="3" width="1" height="5" fill="#4a4a4a"/><rect x="122" y="5" width="1" height="1" fill="#4a4a4a"/><rect x="141" y="5" width="1" height="1" fill="#4a4a4a"/><text x="169.7" y="9" text-anchor="middle" font-family="Liberation Sans, sans-serif" font-size="9" fill="#444">3</text><rect x="188" y="3" width="1" height="5" fill="#4a4a4a"/><rect x="160" y="5" width="1" height="1" fill="#4a4a4a"/><rect x="179" y="5" width="1" height="1" fill="#4a4a4a"/><text x="207.5" y="9" text-anchor="middle" font-family="Liberation Sans, sans-serif" font-size="9" fill="#444">4</text><rect x="226" y="3" width="1" height="5" fill="#4a4a4a"/><rect x="198" y="5" width="1" height="1" fill="#4a4a4a"/><rect x="216" y="5" width="1" height="1" fill="#4a4a4a"/><text x="245.3" y="9" text-anchor="middle" font-family="Liberation Sans, sans-serif" font-size="9" fill="#444">5</text><rect x="264" y="3" width="1" height="5" fill="#4a4a4a"/><rect x="235" y="5" width="1" height="1" fill="#4a4a4a"/><rect x="254" y="5" width="1" height="1" fill="#4a4a4a"/><text x="283.1" y="9" text-anchor="middle" font-family="Liberation Sans, sans-serif" font-size="9" fill="#444">6</text><rect x="301" y="3" width="1" height="5" fill="#4a4a4a"/><rect x="273" y="5" width="1" height="1" fill="#4a4a4a"/><rect x="292" y="5" width="1" height="1" fill="#4a4a4a"/><text x="320.9" y="9" text-anchor="middle" font-family="Liberation Sans, sans-serif" font-size="9" fill="#444">7</text><rect x="339" y="3" width="1" height="5" fill="#4a4a4a"/><rect x="311" y="5" width="1" height="1" fill="#4a4a4a"/><rect x="330" y="5" width="1" height="1" fill="#4a4a4a"/><text x="358.7" y="9" text-anchor="middle" font-family="Liberation Sans, sans-serif" font-size="9" fill="#444">8</text><rect x="377" y="3" width="1" height="5" fill="#4a4a4a"/><rect x="349" y="5" width="1" height="1" fill="#4a4a4a"/><rect x="368" y="5" width="1" height="1" fill="#4a4a4a"/><text x="396.5" y="9" text-anchor="middle" font-family="Liberation Sans, sans-serif" font-size="9" fill="#444">9</text><rect x="415" y="3" width="1" height="5" fill="#4a4a4a"/><rect x="387" y="5" width="1" height="1" fill="#4a4a4a"/><rect x="405" y="5" width="1" height="1" fill="#4a4a4a"/><text x="434.3" y="9" text-anchor="middle" font-family="Liberation Sans, sans-serif" font-size="9" fill="#444">10</text><rect x="453" y="3" width="1" height="5" fill="#4a4a4a"/><rect x="424" y="5" width="1" height="1" fill="#4a4a4a"/><rect x="443" y="5" width="1" height="1" fill="#4a4a4a"/><text x="472.1" y="9" text-anchor="middle" font-family="Liberation Sans, sans-serif" font-size="9" fill="#444">11</text><rect x="490" y="3" width="1" height="5" fill="#4a4a4a"/><rect x="462" y="5" width="1" height="1" fill="#4a4a4a"/><rect x="481" y="5" width="1" height="1" fill="#4a4a4a"/><text x="509.9" y="9" text-anchor="middle" font-family="Liberation Sans, sans-serif" font-size="9" fill="#444">12</text><rect x="528" y="3" width="1" height="5" fill="#4a4a4a"/><rect x="500" y="5" width="1" height="1" fill="#4a4a4a"/><rect x="519" y="5" width="1" height="1" fill="#4a4a4a"/><text x="547.7" y="9" text-anchor="middle" font-family="Liberation Sans, sans-serif" font-size="9" fill="#444">13</text><rect x="566" y="3" width="1" height="5" fill="#4a4a4a"/><rect x="538" y="5" width="1" height="1" fill="#4a4a4a"/><rect x="557" y="5" width="1" height="1" fill="#4a4a4a"/><text x="585.5" y="9" text-anchor="middle" font-family="Liberation Sans, sans-serif" font-size="9" fill="#444">14</text><rect x="604" y="3" width="1" height="5" fill="#4a4a4a"/><rect x="576" y="5" width="1" height="1" fill="#4a4a4a"/><rect x="594" y="5" width="1" height="1" fill="#4a4a4a"/><text x="623.3" y="9" text-anchor="middle" font-family="Liberation Sans, sans-serif" font-size="9" fill="#444">15</text><rect x="642" y="3" width="1" height="5" fill="#4a4a4a"/><rect x="613" y="5" width="1" height="1" fill="#4a4a4a"/><rect x="632" y="5" width="1" height="1" fill="#4a4a4a"/><text x="661.1" y="9" text-anchor="middle" font-family="Liberation Sans, sans-serif" font-size="9" fill="#444">16</text><rect x="679" y="3" width="1" height="5" fill="#4a4a4a"/><rect x="651" y="5" width="1" height="1" fill="#4a4a4a"/><rect x="670" y="5" width="1" height="1" fill="#4a4a4a"/><text x="698.9" y="9" text-anchor="middle" font-family="Liberation Sans, sans-serif" font-size="9" fill="#444">17</text><rect x="717" y="3" width="1" height="5" fill="#4a4a4a"/><rect x="689" y="5" width="1" height="1" fill="#4a4a4a"/><rect x="708" y="5" width="1" height="1" fill="#4a4a4a"/><text x="736.7" y="9" text-anchor="middle" font-family="Liberation Sans, sans-serif" font-size="9" fill="#444">18</text><rect x="755" y="3" width="1" height="5" fill="#4a4a4a"/><rect x="727" y="5" width="1" height="1" fill="#4a4a4a"/><rect x="746" y="5" width="1" height="1" fill="#4a4a4a"/><text x="774.5" y="9" text-anchor="middle" font-family="Liberation Sans, sans-serif" font-size="9" fill="#444">19</text><rect x="765" y="5" width="1" height="1" fill="#4a4a4a"/><rect x="783" y="5" width="1" height="1" fill="#4a4a4a"/><rect x="0" y="3" width="1" height="5" fill="#4a4a4a"/><rect x="792" y="3" width="1" height="5" fill="#4a4a4a"/></svg>
<svg style="left:837.5px;top:156px;" width="9" height="9" viewBox="0 0 9 9"><path d="M0.5 0.7H8.5V3.2L4.5 7.6L0.5 3.2Z" fill="#fff" stroke="#8a8a8a" stroke-width="1"/></svg>
<svg style="left:790px;top:163px;" width="9" height="15" viewBox="0 0 9 15"><path d="M0.5 5.4L4.5 1L8.5 5.4V7.5H0.5Z" fill="#fff" stroke="#8a8a8a" stroke-width="1"/><path d="M0.5 8.5H8.5V14H0.5Z" fill="#fff" stroke="#8a8a8a" stroke-width="1"/></svg>
<svg style="left:1451.5px;top:163px;" width="9" height="8" viewBox="0 0 9 8"><path d="M0.5 7.5V5.2L4.5 0.8L8.5 5.2V7.5Z" fill="#fff" stroke="#8a8a8a" stroke-width="1"/></svg>
<div class="clip" style="left:348px;top:178px;width:1568px;height:837px;">
<div style="left:391px;top:-8px;width:793px;height:485px;background:#fff;border:1px solid #c0c0c0;box-sizing:border-box;"></div>
<div style="left:391px;top:491px;width:793px;height:500px;background:#fff;border:1px solid #c0c0c0;box-sizing:border-box;"></div>
<span class="t" style="left:496px;top:-4.30px;font-size:14.6px;line-height:14.6px;color:#000;transform:scaleX(0.9309);-webkit-text-stroke:0.2px #000;">— Это значит…</span>
<span class="t" style="left:496px;top:17.70px;font-size:14.6px;line-height:14.6px;color:#000;transform:scaleX(0.9975);-webkit-text-stroke:0.2px #000;">— Это значит, что история Сайрона и Дженны не окончена.</span>
<span class="t" style="left:495.5px;top:151.10px;font-size:16.8px;line-height:16.8px;color:#000;font-weight:bold;transform:scaleX(0.9597);">КОНЕЦ</span>
<span class="t" style="left:515px;top:553.10px;font-size:17.8px;line-height:17.8px;color:#000;font-weight:bold;transform:scaleX(0.9850);">Словарь</span>
<span class="t" style="left:591.8px;top:551.30px;font-size:11.4px;line-height:11.4px;color:#000;font-weight:bold;transform:scaleX(1.0259);">40</span>
<svg style="left:481px;top:601px;" width="661" height="260" viewBox="0 0 661 260">
<defs>
<radialGradient id="gMap" cx="48%" cy="60%" r="85%"><stop offset="0" stop-color="#e6d9ba"/><stop offset=".5" stop-color="#dccdad"/><stop offset=".8" stop-color="#bba487"/><stop offset="1" stop-color="#8c7662"/></radialGradient>
<radialGradient id="gPage" cx="55%" cy="55%" r="75%"><stop offset="0" stop-color="#dacdb6"/><stop offset=".6" stop-color="#d0c1a9"/><stop offset="1" stop-color="#ab967e"/></radialGradient>
<radialGradient id="gDk" cx="50%" cy="50%" r="50%"><stop offset="0" stop-color="#3f332c" stop-opacity=".92"/><stop offset=".75" stop-color="#4e4037" stop-opacity=".88"/><stop offset="1" stop-color="#5e4e42" stop-opacity=".8"/></radialGradient>
<radialGradient id="gTop" cx="50%" cy="50%" r="50%"><stop offset="0" stop-color="#6f5f4e" stop-opacity=".85"/><stop offset="1" stop-color="#857562" stop-opacity=".7"/></radialGradient>
<radialGradient id="gBig" cx="50%" cy="50%" r="50%"><stop offset="0" stop-color="#54433b" stop-opacity=".88"/><stop offset="1" stop-color="#5f4d43" stop-opacity=".82"/></radialGradient>
<linearGradient id="gCorner" x1="0" y1="0" x2="1" y2="1"><stop offset="0" stop-color="#4a3c31" stop-opacity=".85"/><stop offset=".42" stop-color="#4a3c31" stop-opacity="0"/></linearGradient>
<linearGradient id="gTR" x1="1" y1="0" x2="0" y2="1"><stop offset="0" stop-color="#5a4a40" stop-opacity=".7"/><stop offset=".4" stop-color="#5a4a40" stop-opacity="0"/></linearGradient>
<linearGradient id="gRight" x1="0" y1="0" x2="1" y2="0"><stop offset="0" stop-color="#6a574b" stop-opacity="0"/><stop offset="1" stop-color="#6a574b" stop-opacity=".5"/></linearGradient>
<linearGradient id="gEdgeR" x1="0" y1="0" x2="1" y2="0"><stop offset="0" stop-color="#3c302a" stop-opacity="0"/><stop offset=".5" stop-color="#3c302a" stop-opacity=".4"/><stop offset="1" stop-color="#3c302a" stop-opacity=".9"/></linearGradient>
<linearGradient id="gBand" x1="0" y1="0" x2="0" y2="1"><stop offset="0" stop-color="#6a6158"/><stop offset=".6" stop-color="#7c7062"/><stop offset="1" stop-color="#554c45"/></linearGradient>
<linearGradient id="gPen" x1="0" y1="0" x2="1" y2="0"><stop offset="0" stop-color="#8d8a82"/><stop offset=".45" stop-color="#e4e2da"/><stop offset="1" stop-color="#9a978e"/></linearGradient>
<filter id="grain" x="0" y="0" width="100%" height="100%"><feTurbulence type="fractalNoise" baseFrequency=".9" numOctaves="2" seed="3" result="n"/><feColorMatrix in="n" type="matrix" values="0 0 0 0 0  0 0 0 0 0  0 0 0 0 0  .9 .9 .9 0 -1.05"/></filter>
<filter id="blot" x="0" y="0" width="100%" height="100%"><feTurbulence type="fractalNoise" baseFrequency=".035" numOctaves="3" seed="11" result="n"/><feColorMatrix in="n" type="matrix" values="0 0 0 0 .3  0 0 0 0 .22  0 0 0 0 .15  1.6 1.6 0 0 -1.25"/></filter>
<filter id="stars" x="0" y="0" width="100%" height="100%"><feTurbulence type="fractalNoise" baseFrequency=".8" numOctaves="1" seed="7" result="n"/><feColorMatrix in="n" type="matrix" values="0 0 0 0 .75  0 0 0 0 .75  0 0 0 0 .72  2.5 2.5 0 0 -2.9"/></filter>
<filter id="soft"><feGaussianBlur stdDeviation="1.2"/></filter>
<clipPath id="cMap"><path d="M26 5H312L316 22L330 19L338 27L352 24L360 31L374 28L396 42V260H26Z"/></clipPath>
<clipPath id="cGap"><path d="M402.5 52V260H446V5H312L316 22L330 19L338 27L352 24L360 31L374 28L396 42Z"/></clipPath>
</defs>
<rect width="661" height="260" fill="#4b4d49"/>
<!-- top band -->
<rect x="0" y="0" width="661" height="5" fill="#7a6b5b"/>
<rect x="300" y="4" width="150" height="30" fill="#656a61"/>
<rect x="445" y="0" width="216" height="23" fill="url(#gBand)"/>
<!-- left edge -->
<rect x="0" y="0" width="10" height="260" fill="#9a8e73"/><rect x="0" y="0" width="10" height="62" fill="#646565"/><rect x="0" y="150" width="9" height="32" fill="#77797a"/>
<rect x="7.5" y="12" width="11.5" height="248" fill="#23262c"/>
<path d="M0 0H34V6L20 12L10 40H0Z" fill="#646565"/>
<rect x="18.5" y="14" width="8" height="246" fill="#ae9468"/>
<!-- map parchment -->
<g clip-path="url(#cMap)">
<rect x="26" y="0" width="372" height="260" fill="url(#gMap)"/>
<rect x="26" y="0" width="372" height="260" filter="url(#blot)" opacity=".33"/>
<rect x="26" y="0" width="372" height="260" fill="url(#gCorner)"/>
<rect x="26" y="0" width="372" height="260" fill="url(#gTR)"/>
<rect x="270" y="0" width="128" height="260" fill="url(#gRight)"/>
<!-- pale translucent shapes -->
<g fill="#f3ead6" opacity=".22">
<circle cx="207" cy="150" r="95"/>
<ellipse cx="130" cy="175" rx="62" ry="28" transform="rotate(28 130 175)"/>
<ellipse cx="285" cy="175" rx="62" ry="28" transform="rotate(-28 285 175)"/>
<circle cx="208" cy="227" r="56"/>
<circle cx="140" cy="262" r="52"/>
<path d="M120 60C150 40 260 40 300 62C270 120 150 120 120 60Z"/>
</g>
<g fill="none" stroke="#fbf5e6" stroke-width="1" opacity=".2"><circle cx="207" cy="227" r="74"/><circle cx="207" cy="227" r="92"/><circle cx="207" cy="227" r="110"/><circle cx="207" cy="227" r="128"/><circle cx="207" cy="227" r="146"/><circle cx="207" cy="227" r="166"/><circle cx="207" cy="227" r="188"/></g>
<!-- dark band sweeping from left circle -->
<path d="M26 30C50 90 120 165 207 200C160 190 90 160 26 135Z" fill="#4f4035" opacity=".42"/>
<path d="M398 95C360 150 300 185 207 205C290 200 350 180 398 150Z" fill="#5a4a3e" opacity=".25"/>
<!-- circles -->
<circle cx="205.8" cy="160" r="30.5" fill="#9b866f" opacity=".5"/>
<circle cx="263.3" cy="186" r="30.5" fill="#8d6f64" opacity=".55"/>
<circle cx="283" cy="262" r="33" fill="#a58d72" opacity=".5"/>
<circle cx="204.2" cy="30.7" r="17.6" fill="url(#gTop)"/>
<circle cx="71.5" cy="116.3" r="20.6" fill="url(#gDk)"/>
<circle cx="345.8" cy="117.3" r="44" fill="url(#gBig)"/>
<path d="M375 78C352 104 332 124 311 139C280 163 240 200 207 227C222 182 258 122 298 92C322 76 352 64 375 78Z" fill="#e4d7ba" opacity=".6"/>
<rect x="356" y="44" width="42" height="216" fill="url(#gEdgeR)"/>
<path d="M207 171A56 56 0 0 1 263 227" fill="none" stroke="#4a3d33" stroke-width=".8" opacity=".8"/>
<!-- needles -->
<g fill="#fbf6e8" opacity=".9">
<path d="M204.2 94L205.6 127H202.8Z"/>
<path d="M100 154L128 168L126 171Z"/>
<path d="M313 153L287 166L288.5 169Z"/>
</g>
<!-- star -->
<radialGradient id="gHalo" cx="50%" cy="50%" r="50%"><stop offset="0" stop-color="#8c7860" stop-opacity=".55"/><stop offset="1" stop-color="#8c7860" stop-opacity="0"/></radialGradient>
<circle cx="207" cy="227" r="48" fill="url(#gHalo)"/>
<path d="M160 205C175 198 190 204 196 214C184 212 170 214 160 205Z" fill="#5b4a3c" opacity=".45"/>
<polygon points="207.0,205.0 208.9,217.7 215.4,206.7 212.3,219.1 222.6,211.4 214.9,221.7 227.3,218.6 216.3,225.1 229.0,227.0 216.3,228.9 227.3,235.4 214.9,232.3 222.6,242.6 212.3,234.9 215.4,247.3 208.9,236.3 207.0,249.0 205.1,236.3 198.6,247.3 201.7,234.9 191.4,242.6 199.1,232.3 186.7,235.4 197.7,228.9 185.0,227.0 197.7,225.1 186.7,218.6 199.1,221.7 191.4,211.4 201.7,219.1 198.6,206.7 205.1,217.7" fill="#f7f0d2"/>
<polygon points="207.0,197.0 209.1,224.9 237.0,227.0 209.1,229.1 207.0,257.0 204.9,229.1 177.0,227.0 204.9,224.9" fill="#f7f0d2" opacity=".9"/>
<circle cx="207" cy="227" r="11" fill="#fbf6dc"/>
<!-- lines -->
<g stroke="#2e2721" stroke-width=".8" fill="none">
<path d="M168.3 77L209.5 236"/><path d="M180 238L336 169.5"/><path d="M116 225.8H396" opacity=".6"/>
</g>
<!-- symbols -->
<g fill="none" stroke="#2e2721" stroke-width="1">
<circle cx="204.2" cy="34.5" r="5.2"/><path d="M204.2 29V22M203 25L204.2 22L205.4 25"/>
<circle cx="71" cy="113.5" r="5"/><path d="M71 118.5V122M66.5 122.5H75.5"/>
<path d="M201 151H204C204 147.5 209 147.5 209 151H212"/>
<path d="M141.5 176L146.5 185.500H136.500ZM137 178.500H146"/>
<path d="M270 177L274.5 185.500H265.500Z" opacity=".7"/>
<path d="M343 100C346 97 350 99 349 103C348 106 345 108 343 110H352M350 98V113" opacity=".8"/>
<circle cx="378.5" cy="223.5" r="7"/><circle cx="378.5" cy="224.5" r="3.5"/>
<circle cx="60.5" cy="26.5" r="21.5" stroke-width=".7" opacity=".65"/>
</g>
<g fill="#2a241f" font-family="'Liberation Sans', sans-serif" font-size="13.5" text-anchor="middle">
<text x="161.5" y="87.5">Z</text><text x="331" y="157">X</text><text x="342.5" y="225" font-size="12.5">Y</text>
</g>
<g fill="#4a3f35" font-family="'Liberation Serif', serif" font-size="5.6" text-anchor="middle" opacity=".8"><text x="60.5" y="27.5">БИБЛИОТЕКА</text><text x="60.5" y="34.5">АКВИРЫ</text></g>
<path d="M58 10C61 8 64 11 61 14C59 16 62 18 64 17" fill="none" stroke="#4a3f35" stroke-width=".8" opacity=".7"/>
<!-- moons -->
<circle cx="39.8" cy="221.5" r="6.2" fill="#ded8cc"/><circle cx="53.4" cy="221.5" r="6.2" fill="#3f332c"/><circle cx="55.8" cy="221.5" r="4.6" fill="#5a4a3f"/>
<!-- speckles -->
<g fill="#f4eedd" opacity=".55"><circle cx="120" cy="11" r="4.5"/><circle cx="46" cy="72" r="5"/><circle cx="108" cy="91" r="5.5"/><circle cx="33" cy="75" r="3"/><circle cx="286" cy="14" r="2.5"/><circle cx="325" cy="72" r="4"/><circle cx="292" cy="118" r="4.5"/><circle cx="95" cy="40" r="2.5"/></g>
<rect x="26" y="0" width="372" height="260" filter="url(#grain)" opacity=".1"/>
</g>
<!-- strip right of map, dark gap -->
<rect x="395.5" y="42" width="7" height="218" fill="#937a5c"/>
<rect x="402.5" y="26" width="43.5" height="234" fill="#353940"/>
<path d="M300 5H446V30L402 52L396 42L374 28L360 31L352 24L338 27L330 19L316 22L312 5Z" fill="#656a61"/>
<g clip-path="url(#cGap)"><rect x="300" y="5" width="146" height="255" filter="url(#stars)" opacity=".4"/></g>
<rect x="7.5" y="12" width="11.5" height="248" filter="url(#stars)" opacity=".5"/>
<path d="M404 150C420 170 436 200 440 236" stroke="#8a8c8a" stroke-width="1" fill="none" opacity=".35"/>
<ellipse cx="422" cy="236" rx="22" ry="14" fill="#5f5a55" opacity=".45"/>
<!-- right page -->
<path d="M445.5 15.2L661 21.5V260H445.5Z" fill="url(#gPage)"/>
<path d="M445.5 15.500H500L445.5 80Z" fill="#7d6550" opacity=".55" filter="url(#soft)"/>
<path d="M445.5 15.500H661V30C600 22 520 22 445.5 34Z" fill="#8a745c" opacity=".35"/>
<rect x="445.5" y="15.5" width="216" height="245" filter="url(#grain)" opacity=".08"/>
<!-- pen -->
<path d="M446 186L449.5 190L436 240H426Z" fill="url(#gPen)"/>
<path d="M446 186L436 240" stroke="#77746c" stroke-width=".6"/>
<!-- handwriting -->
<g fill="#2b2621" stroke="#2b2621" stroke-width=".3">
<text x="456" y="44" textLength="130" lengthAdjust="spacingAndGlyphs" font-size="13.5" font-family="'Liberation Serif', serif" font-style="italic" >КАРТА ЧЕЛОВЕКА</text><text x="455" y="78" textLength="5.5" lengthAdjust="spacingAndGlyphs" font-size="13" font-family="'Liberation Serif', serif" font-style="italic" >1</text><text x="474" y="78" textLength="111" lengthAdjust="spacingAndGlyphs" font-size="11.8" font-family="'Liberation Serif', serif" font-style="italic" >(Z) ВЫСШАЯ ДУША.</text><text x="478" y="94.5" textLength="96" lengthAdjust="spacingAndGlyphs" font-size="11.8" font-family="'Liberation Serif', serif" font-style="italic" >СВЯЗЬ С ЕДИНЫМ.</text><text x="454.5" y="113" textLength="151" lengthAdjust="spacingAndGlyphs" font-size="12.6" font-family="'Liberation Serif', serif" font-style="italic" >(уточнить у учителя: что</text><text x="454.5" y="128.5" textLength="137" lengthAdjust="spacingAndGlyphs" font-size="10.8" font-family="'Liberation Serif', serif" font-style="italic" >ТАКОЕ В ЧЕЛОВЕКЕ -Z???)</text><text x="452.5" y="161.5" textLength="7.5" lengthAdjust="spacingAndGlyphs" font-size="13" font-family="'Liberation Serif', serif" font-style="italic" >2</text><text x="470" y="161" textLength="104" lengthAdjust="spacingAndGlyphs" font-size="11.8" font-family="'Liberation Serif', serif" font-style="italic" >(У) ЗЕМНЫЕ ДУШИ:</text><text x="469" y="178.4" textLength="53" lengthAdjust="spacingAndGlyphs" font-size="10.8" font-family="'Liberation Serif', serif" font-style="italic" >-  РАЗУМ,</text><text x="462" y="195.3" textLength="66" lengthAdjust="spacingAndGlyphs" font-size="10.8" font-family="'Liberation Serif', serif" font-style="italic" >-  ЧУВСТВА,</text><text x="533.5" y="203.5" textLength="28" lengthAdjust="spacingAndGlyphs" font-size="13.5" font-family="'Liberation Serif', serif" font-style="italic" >воля</text><text x="462" y="213" textLength="73" lengthAdjust="spacingAndGlyphs" font-size="10.8" font-family="'Liberation Serif', serif" font-style="italic" >-  ЛИЧНОСТЬ,</text><text x="452.6" y="228" textLength="82" lengthAdjust="spacingAndGlyphs" font-size="10.8" font-family="'Liberation Serif', serif" font-style="italic" >-  ИНСТИНКТЫ</text>
<g transform="rotate(12 593 142)" font-size="6.2" font-family="'Liberation Serif', serif" font-style="italic" font-weight="bold">
<text x="596" y="143" textLength="46" lengthAdjust="spacingAndGlyphs">СВЯЗЬ СФЕР</text><text x="594" y="151" textLength="54" lengthAdjust="spacingAndGlyphs">ЧЕРЕЗ КАНАЛЫ</text><text x="592" y="159" textLength="56" lengthAdjust="spacingAndGlyphs">И МЕРИДИАНЫ</text></g>
</g>
<g fill="none" stroke="#2b2621" stroke-width="1" stroke-linecap="round">
<path d="M478 56C500 53 540 55 586 57M490 59.500C520 58 560 58.5 583 61" stroke-width="1.4" opacity=".75"/>
<ellipse cx="457.5" cy="73" rx="6.5" ry="7.5"/><ellipse cx="456" cy="157" rx="7" ry="7.5"/>
<path d="M609 98C604 86 597 82 596.5 90C596 98 603 102 607.5 107C612 98 621 92 619.5 85C618 80 611 84 609 98Z" opacity=".75"/>
<path d="M583 153C581 159 580 166 580.5 171.500M577 167.500L580.5 172L584 167.5" stroke-width="1.2"/>
<circle cx="588.6" cy="197.6" r="23" stroke-width="1.3"/>
<path d="M588.6 236V200M588.6 214L578 200M588.6 208L599 194M588.6 200L582 186L576 192M582 186L584 178M588.6 200L595 184L603 190M595 184L592 177M578 200L570 196M578 200L574 208M599 194L607 198M599 194L604 186M586 236C584 243 580 247 577 249M591 236C593 243 597 247 600 249" stroke-width="1.100"/>
<path d="M571 190L580 182L574 178M596 206L606 210L602 204M570 206L580 212" stroke-width=".9"/>
<path d="M637 181C639 200 628 212 607 214M612.5 209L606 214L612 219" stroke-width="1.3"/>
<path d="M478 210.500C495 208 515 209 533 210.5" stroke-width="1.800"/>
</g>
</svg>
</div>
<div style="left:380px;top:788px;width:210px;height:217px;background:#f0f0f0;border:1px solid #dd9f70;box-sizing:border-box;box-shadow:0 4px 18px 1px rgba(0,0,0,0.36),0 0 4px rgba(0,0,0,0.15);"></div>
<div style="left:381px;top:789px;width:208px;height:30px;background:#fff;"></div>
<span class="t" style="left:389.5px;top:797.65px;font-size:11.7px;line-height:11.7px;color:#000;transform:scaleX(0.9773);">Статистика</span>
<span class="t" style="left:518.5px;top:798.00px;font-size:12px;line-height:12px;color:#000;transform:scaleX(0.8972);">?</span>
<svg style="left:560px;top:797px;" width="13" height="13" viewBox="0 0 13 13"><path d="M1 1L11.5 11.5M11.5 1L1 11.5" stroke="#000" stroke-width="1.1" fill="none"/></svg>
<span class="t" style="left:387.5px;top:827.50px;font-size:11px;line-height:11px;color:#000;transform:scaleX(1.0028);">Статистика:</span>
<div style="left:454px;top:832px;width:129px;height:1px;background:#dcdcdc;"></div>
<span class="t" style="left:396.5px;top:847.50px;font-size:11px;line-height:11px;color:#000;transform:scaleX(1.0400);">Страниц</span>
<span class="t" style="left:565.4px;top:847.50px;font-size:11px;line-height:11px;color:#000;transform:scaleX(0.9369);">831</span>
<span class="t" style="left:396.5px;top:863.50px;font-size:11px;line-height:11px;color:#000;transform:scaleX(0.9640);">Слов</span>
<span class="t" style="left:544px;top:863.50px;font-size:11px;line-height:11px;color:#000;transform:scaleX(0.9707);">332 085</span>
<span class="t" style="left:396.5px;top:879.50px;font-size:11px;line-height:11px;color:#000;transform:scaleX(1.0443);">Знаков (без пробелов)</span>
<span class="t" style="left:535.6px;top:879.50px;font-size:11px;line-height:11px;color:#000;transform:scaleX(0.9604);">1 879 602</span>
<span class="t" style="left:396.5px;top:895.50px;font-size:11px;line-height:11px;color:#000;transform:scaleX(1.0356);">Знаков (с пробелами)</span>
<span class="t" style="left:535.6px;top:895.50px;font-size:11px;line-height:11px;color:#000;transform:scaleX(0.9604);">2 226 725</span>
<span class="t" style="left:396.5px;top:911.50px;font-size:11px;line-height:11px;color:#000;transform:scaleX(1.0187);">Абзацев</span>
<span class="t" style="left:550.6px;top:911.50px;font-size:11px;line-height:11px;color:#000;transform:scaleX(0.9508);">12 050</span>
<span class="t" style="left:396.5px;top:927.50px;font-size:11px;line-height:11px;color:#000;transform:scaleX(1.0422);">Строк</span>
<span class="t" style="left:550.6px;top:927.50px;font-size:11px;line-height:11px;color:#000;transform:scaleX(0.9508);">34 928</span>
<div style="left:387px;top:948.5px;width:13px;height:13px;background:#fff;border:1px solid #333;box-sizing:border-box;"></div>
<svg style="left:387px;top:948.5px;" width="13" height="13" viewBox="0 0 13 13"><path d="M2.8 6.6L5.4 9.4L10.4 3.4" fill="none" stroke="#222" stroke-width="1.1"/></svg>
<span class="t" style="left:404.2px;top:949.50px;font-size:11px;line-height:11px;color:#000;transform:scaleX(1.0514);">Учитывать надписи и сноски</span>
<div style="left:404.5px;top:960.3px;width:6.5px;height:1px;background:#1a1a1a;"></div>
<div style="left:508px;top:974px;width:74px;height:22px;background:#e1e1e1;border:2px solid #0078d7;box-sizing:border-box;"></div>
<div style="left:511px;top:977px;width:68px;height:16px;background:transparent;border:1px dotted #111;box-sizing:border-box;"></div>
<span class="t" style="left:522.8px;top:978.65px;font-size:11.7px;line-height:11.7px;color:#000;transform:scaleX(0.9885);">Закрыть</span>
<div style="left:0px;top:1015px;width:1916px;height:1px;background:#c8c8c8;"></div>
<div style="left:0px;top:1016px;width:1916px;height:20px;background:#f3f3f3;"></div>
<span class="t" style="left:5px;top:1018.65px;font-size:11.7px;line-height:11.7px;color:#444;transform:scaleX(0.9550);">Страница 806 из 831</span>
<span class="t" style="left:133.5px;top:1018.65px;font-size:11.7px;line-height:11.7px;color:#444;transform:scaleX(0.9318);">Число слов: 332085</span>
<svg style="left:252px;top:1018px;" width="16" height="16" viewBox="0 0 16 16"><g fill="none" stroke="#666" stroke-width="1"><path d="M7.5 3.2C5.5 2 3 1.8 1.5 2V12.8C3.5 12.6 5.8 13 7.5 14.2ZM7.5 3.2C8.6 2.5 9.6 2.2 10.5 2.1M7.5 14.2C8.8 13.3 10 13 11 12.9"/><path d="M10.6 5.4L14.6 10M14.6 5.4L10.6 10" stroke-width="1.3"/></g></svg>
<span class="t" style="left:285.5px;top:1018.65px;font-size:11.7px;line-height:11.7px;color:#444;transform:scaleX(0.9773);">русский</span>
<svg style="left:1638px;top:1018px;" width="16" height="16" viewBox="0 0 16 16"><g fill="none" stroke="#666" stroke-width="1"><path d="M8 2.8C6 1.6 3.5 1.4 1.5 1.6V12.4C4 12.2 6.2 12.6 8 13.8C9.8 12.6 12 12.2 14.5 12.4V1.6C12.5 1.4 10 1.6 8 2.8ZM8 2.8V15"/><path d="M3 4.5H6.5M3 6.5H6.5M3 8.5H6.5M3 10.5H6.5M9.5 4.5H13M9.5 6.5H13M9.5 8.5H13M9.5 10.5H13" stroke-width="1"/></g></svg>
<div style="left:1666px;top:1016px;width:38px;height:20px;background:#c6c6c6;"></div>
<svg style="left:1677px;top:1018px;" width="16" height="16" viewBox="0 0 16 16"><g fill="none" stroke="#555" stroke-width="1"><rect x="1.5" y="1.5" width="13" height="12"/><path d="M3 3.5H13M3 5.5H13M3 7.5H13M3 9.5H13M3 11.5H13" stroke-width="1"/></g></svg>
<svg style="left:1715px;top:1018px;" width="17" height="16" viewBox="0 0 17 16"><g fill="none" stroke="#666" stroke-width="1"><path d="M7 11.5H1.5V1.5H12.5V6"/><path d="M3 3.5H11M3 5.5H11M3 7.5H8M3 9.5H7" stroke-width="1"/><circle cx="11.6" cy="10.6" r="3.9" fill="#f3f3f3"/><path d="M8.6 8.6C10 9.4 10.6 10.4 10 12.2M12.2 7C12 8.6 13 9.6 15 9.8M10.6 14.2C11.8 13.4 13 13 14.6 12.8" stroke-width="0.8"/></g></svg>
<div style="left:1747px;top:1025px;width:6px;height:2px;background:#555;"></div>
<div style="left:1757px;top:1025.5px;width:100px;height:1px;background:#8a8a8a;"></div>
<div style="left:1805px;top:1020px;width:5px;height:11px;background:#666;"></div>
<div style="left:1860px;top:1025px;width:8px;height:2px;background:#555;"></div>
<div style="left:1863px;top:1022px;width:2px;height:8px;background:#555;"></div>
<span class="t" style="left:1880px;top:1018.65px;font-size:11.7px;line-height:11.7px;color:#444;transform:scaleX(0.8600);">100 %</span>
</div></body></html>
